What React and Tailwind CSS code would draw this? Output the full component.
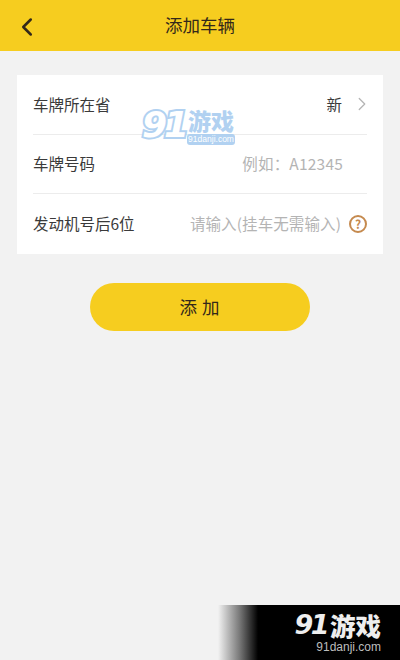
import { ChevronLeft, ChevronRight } from 'lucide-react';

const font = 'font-["Noto_Sans_CJK_SC","Noto_Sans",sans-serif]';

function Row({ label, children, last }) {
  return (
    <div className={`flex h-[59.5px] items-center justify-between ${last ? '' : 'border-b border-[#ececec]'}`}>
      <span className="text-[15.5px] text-[#3a3a3a]">{label}</span>
      {children}
    </div>
  );
}

export default function App() {
  return (
    <div className={`relative flex h-[660px] w-[400px] flex-col overflow-hidden bg-[#f2f2f2] ${font}`}>
      {/* Header */}
      <header className="relative flex h-[51px] shrink-0 items-center justify-center bg-[#f6cd1f]">
        <ChevronLeft className="absolute left-[12px] top-[12px] h-[30px] w-[30px] text-[#33281a]" strokeWidth={2} />
        <h1 className="text-[17.5px] font-normal text-[#33281a]">添加车辆</h1>
      </header>

      {/* Form */}
      <div className="mx-[17px] mt-6 bg-white px-4">
        <Row label="车牌所在省">
          <div className="flex items-center">
            <span className="text-[15.5px] text-[#3a3a3a]">新</span>
            <ChevronRight className="ml-[9px] mr-[-6px] h-[22px] w-[22px] text-[#b5b5b5]" strokeWidth={1.4} />
          </div>
        </Row>
        <Row label="车牌号码">
          <span className="mr-6 text-[15.5px] tracking-[0.2px] text-[#b4b4b4]">例如：A12345</span>
        </Row>
        <Row label="发动机号后6位" last>
          <div className="flex items-center gap-[8px]">
            <span className="text-[15.5px] tracking-[0.1px] text-[#b4b4b4]">请输入(挂车无需输入)</span>
            <span className="flex h-[18px] w-[18px] items-center justify-center rounded-full border-2 border-[#c58a4f] text-[12px] font-bold leading-none text-[#c58a4f]">?</span>
          </div>
        </Row>
      </div>

      {/* Submit */}
      <button className="mx-auto mt-[29.5px] h-[48px] w-[220px] rounded-full bg-[#f6cd1f] pl-[4px] text-[17.5px] tracking-[5px] text-[#33281a]">
        添加
      </button>

      {/* Center watermark */}
      <div className="absolute left-[142px] top-[106px] flex items-start opacity-90">
        <span className={'font-["DejaVu_Sans"] text-[36px] font-bold italic leading-[38px] tracking-[-3px] text-white [-webkit-text-stroke:4px_#a9cdf0] [paint-order:stroke_fill]'}>91</span>
        <div className="ml-[1px] mt-[2px] flex flex-col items-center">
          <span className="text-[23px] font-black leading-[24px] text-[#a9cdf0]">游戏</span>
          <span className="mt-[2px] rounded-[3px] bg-[#a9cdf0] px-[1px] font-['Liberation_Sans'] text-[8.5px] leading-[11px] text-white">91danji.com</span>
        </div>
      </div>

      {/* Corner watermark */}
      <div className="absolute bottom-0 right-0 flex h-[55px] w-[182px] justify-end bg-[linear-gradient(to_right,#f2f2f2_0%,#777_12%,#000_22%,#000_100%)] pr-[19px]">
        <div className="mt-[7px] flex flex-col items-end">
          <div className="flex items-center leading-none text-[#eeeeee]">
            <span className={'font-["DejaVu_Sans"] text-[27px] font-bold italic leading-[26px] tracking-[-2.5px]'}>91</span>
            <span className="ml-[3px] text-[25.5px] font-black leading-[26px]">游戏</span>
          </div>
          <span className="mt-[3px] font-['Liberation_Sans'] text-[12px] leading-[12px] text-[#bdbdbd]">91danji.com</span>
        </div>
      </div>
    </div>
  );
}
